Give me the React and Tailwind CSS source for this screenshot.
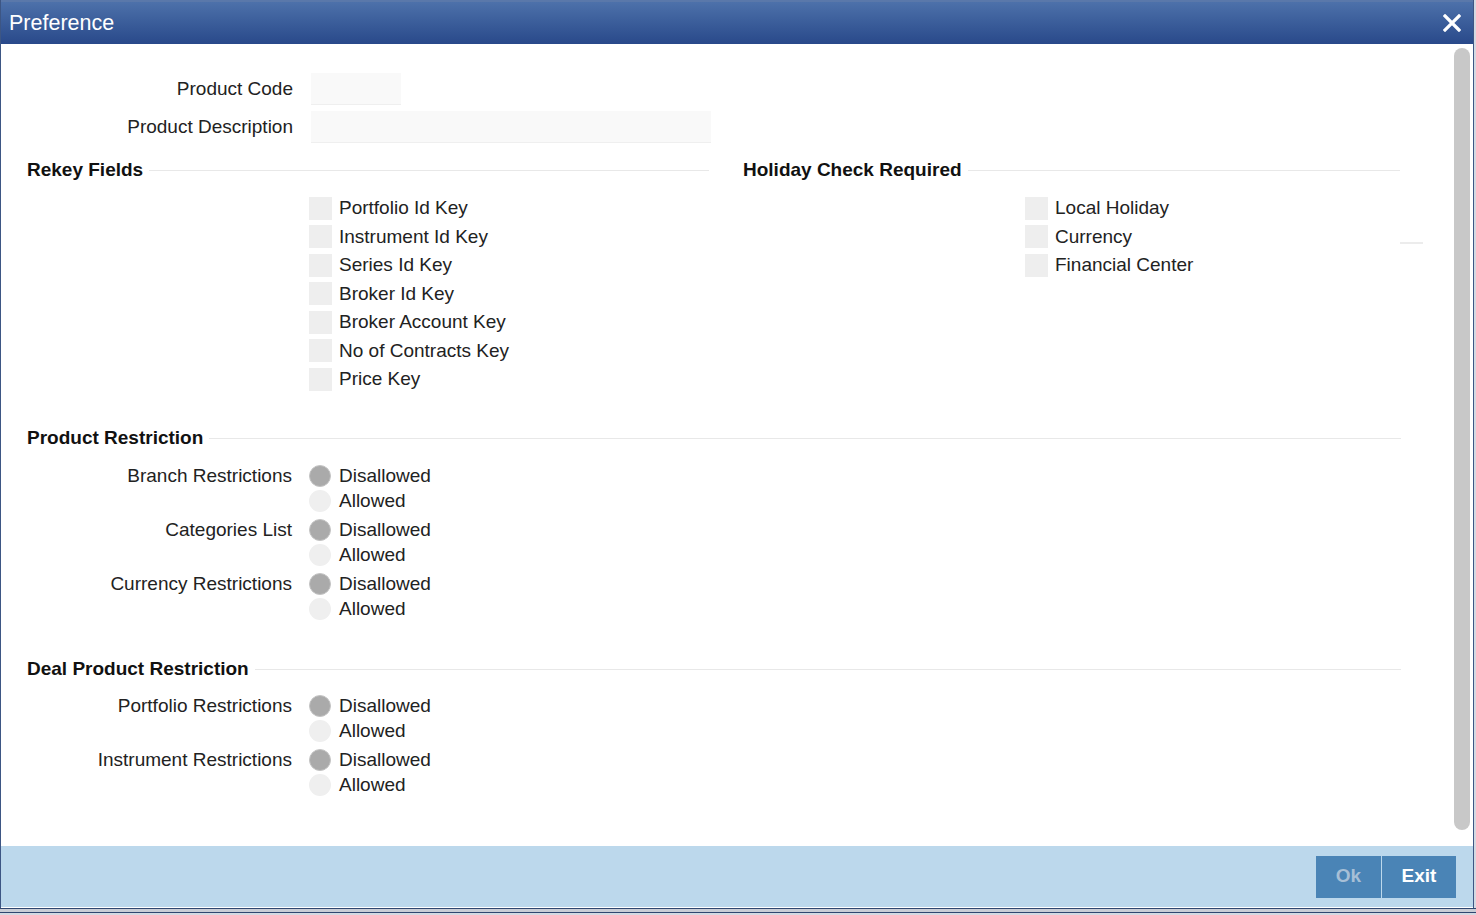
import React from "react";

const rekeyFields = [
	"Portfolio Id Key",
	"Instrument Id Key",
	"Series Id Key",
	"Broker Id Key",
	"Broker Account Key",
	"No of Contracts Key",
	"Price Key",
];

const holidayFields = ["Local Holiday", "Currency", "Financial Center"];

const Heading = ({ title, className = "" }) => (
	<div className={`flex items-center h-[24px] ${className}`}>
		<span className="text-[19px] font-bold text-[#111] whitespace-nowrap">{title}</span>
		<div className="flex-1 h-px bg-[#e8e8e8] ml-[6px]"></div>
	</div>
);

const CheckRow = ({ label }) => (
	<div className="flex items-center h-[28.5px]">
		<div className="w-[23px] h-[23px] bg-[#eeeeee]"></div>
		<span className="ml-[7px] text-[19px] text-[#222]">{label}</span>
	</div>
);

const Radio = ({ checked }) => (
	<div
		className={`w-[22px] h-[22px] rounded-full ${
			checked ? "bg-[#aaaaaa] border border-[#c4c4c4]" : "bg-[#efefef]"
		}`}
	></div>
);

const RadioGroup = ({ label }) => (
	<div className="flex mb-[4px]">
		<div className="w-[265px] h-[25px] flex items-center justify-end text-[19px] text-[#222]">
			{label}
		</div>
		<div className="ml-[17px] flex flex-col">
			<div className="flex items-center h-[25px]">
				<Radio checked />
				<span className="ml-[8px] text-[19px] text-[#222]">Disallowed</span>
			</div>
			<div className="flex items-center h-[25px]">
				<Radio />
				<span className="ml-[8px] text-[19px] text-[#222]">Allowed</span>
			</div>
		</div>
	</div>
);

export default function App() {
	return (
		<div
			className="w-[1476px] h-[915px] bg-[#d4d9e2] overflow-hidden"
			style={{ fontFamily: '"Liberation Sans", Arial, sans-serif' }}
		>
			<div className="w-[1474px] h-[908px] flex flex-col bg-white border-l border-r border-[#3d5684]">
				{/* Title bar */}
				<div className="h-[44px] flex items-center justify-between border-t-2 border-[#5a78aa] bg-gradient-to-b from-[#4d71aa] to-[#29498a]">
					<span className="ml-[8px] text-[21.5px] text-white">Preference</span>
					<svg width="18" height="18" viewBox="0 0 18 18" className="mr-[12px]">
						<path d="M2 2 L16 16 M16 2 L2 16" stroke="white" strokeWidth="3.2" strokeLinecap="square" />
					</svg>
				</div>

				{/* Body */}
				<div className="flex-1 flex min-h-0">
					<div className="flex-1 pl-[26px] pt-[29px]">
						{/* Product code / description */}
						<div className="flex items-center h-[32px]">
							<div className="w-[266px] text-right text-[19px] text-[#222]">Product Code</div>
							<div className="ml-[18px] w-[90px] h-[32px] bg-[#f9f9f9] border-b border-[#efefef]"></div>
						</div>
						<div className="flex items-center h-[32px] mt-[6px]">
							<div className="w-[266px] text-right text-[19px] text-[#222]">Product Description</div>
							<div className="ml-[18px] w-[400px] h-[32px] bg-[#f9f9f9] border-b border-[#efefef]"></div>
						</div>

						{/* Rekey / Holiday */}
						<div className="flex mt-[15px]">
							<div className="w-[682px]">
								<Heading title="Rekey Fields" />
								<div className="pl-[282px] pt-[12px]">
									{rekeyFields.map((f) => (
										<CheckRow key={f} label={f} />
									))}
								</div>
							</div>
							<div className="w-[657px] ml-[34px]">
								<Heading title="Holiday Check Required" />
								<div className="pl-[282px] pt-[12px]">
									{holidayFields.map((f) => (
										<CheckRow key={f} label={f} />
									))}
								</div>
							</div>
							<div className="w-[23px] h-[2px] mt-[84px] bg-[#ececec]"></div>
						</div>

						{/* Product Restriction */}
						<div className="w-[1374px] mt-[33px]">
							<Heading title="Product Restriction" />
						</div>
						<div className="pt-[13px]">
							<RadioGroup label="Branch Restrictions" />
							<RadioGroup label="Categories List" />
							<RadioGroup label="Currency Restrictions" />
						</div>

						{/* Deal Product Restriction */}
						<div className="w-[1374px] mt-[36px]">
							<Heading title="Deal Product Restriction" />
						</div>
						<div className="pt-[12px]">
							<RadioGroup label="Portfolio Restrictions" />
							<RadioGroup label="Instrument Restrictions" />
						</div>
					</div>

					{/* Scrollbar */}
					<div className="w-[19px] pt-[4px] pb-[16px] flex">
						<div className="w-[16px] h-full rounded-full bg-[#c8c8c8]"></div>
					</div>
				</div>

				{/* Footer */}
				<div className="h-[61px] bg-[#bcd8ec] flex items-center justify-end pr-[17px]">
					<button className="w-[65px] h-[42px] bg-[#4a84b6] text-[19px] font-bold text-[#a7bfd6]">Ok</button>
					<button className="w-[74px] h-[42px] ml-px bg-[#4a84b6] text-[19px] font-bold text-white">Exit</button>
				</div>
				<div className="h-px bg-white"></div>
			</div>
			<div className="h-px bg-[#2f4670]"></div>
			<div className="h-[3px] bg-[#c9cdd6]"></div>
			<div className="h-px bg-[#2f4670]"></div>
		</div>
	);
}
